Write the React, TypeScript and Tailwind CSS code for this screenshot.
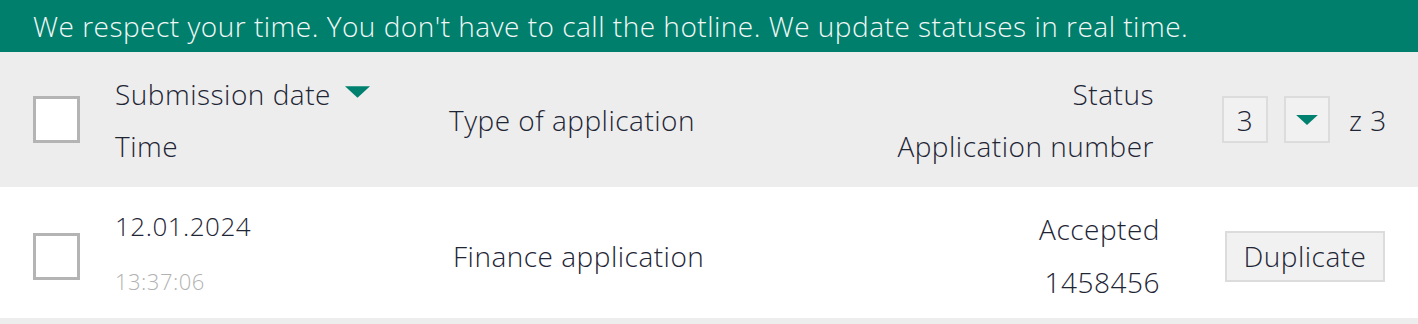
const font = { fontFamily: '"Open Sans", sans-serif' };

function Checkbox() {
  return <div className="w-[47px] h-[47px] shrink-0 border-[3px] border-[#b4b4b4] bg-white" />;
}

function Caret({ className }: { className?: string }) {
  return (
    <svg viewBox="0 0 26 12" className={className} fill="#00806e">
      <path d="M0 0 H26 L13 12 Z" />
    </svg>
  );
}

export default function App() {
  return (
    <div className="w-[1418px] h-[324px] bg-[#ededed] font-light tracking-[0.5px] text-[#1e2535]" style={font}>
      {/* Banner */}
      <div className="h-[52px] bg-[#007f6d] flex items-center px-[33px]">
        <p className="text-[28px] text-[#f2f7f6] whitespace-nowrap leading-none">
          We respect your time. You don't have to call the hotline. We update statuses in real time.
        </p>
      </div>

      {/* Header */}
      <div className="h-[135px] flex items-center px-[33px] text-[28px] leading-[52px]">
        <Checkbox />
        <div className="ml-[35px] w-[334px] flex flex-col">
          <div className="flex items-center">
            <span>Submission date</span>
            <Caret className="w-[25px] h-[12px] ml-[14px] mt-[-4px]" />
          </div>
          <span>Time</span>
        </div>
        <div className="flex-1">Type of application</div>
        <div className="flex flex-col items-end mr-[-2px]">
          <span>Status</span>
          <span>Application number</span>
        </div>
        <div className="ml-[70px] w-[163px] flex items-center whitespace-nowrap">
          <div className="w-[46px] h-[47px] shrink-0 border-2 border-[#dcdcdc] bg-[#f1f1f1] flex items-center justify-center">
            3
          </div>
          <div className="ml-[16px] w-[46px] h-[47px] shrink-0 border-2 border-[#dcdcdc] bg-[#f1f1f1] flex items-center justify-center">
            <Caret className="w-[22px] h-[10px]" />
          </div>
          <span className="ml-[19px]">z 3</span>
        </div>
      </div>

      {/* Row */}
      <div className="h-[131px] bg-white flex items-center px-[33px] pt-[7px] text-[28px] leading-[53px]">
        <Checkbox />
        <div className="ml-[35px] w-[338px] flex flex-col">
          <span className="text-[26px] mt-[-4px]">12.01.2024</span>
          <span className="text-[22px] text-[#b2b2b2] mt-[2px]">13:37:06</span>
        </div>
        <div className="flex-1">Finance application</div>
        <div className="flex flex-col items-end mr-[-3px]">
          <span>Accepted</span>
          <span>1458456</span>
        </div>
        <div className="ml-[68px] w-[160px] flex items-center justify-center h-[51px] border-2 border-[#dcdcdc] bg-[#f1f1f1]">
          Duplicate
        </div>
      </div>
    </div>
  );
}
